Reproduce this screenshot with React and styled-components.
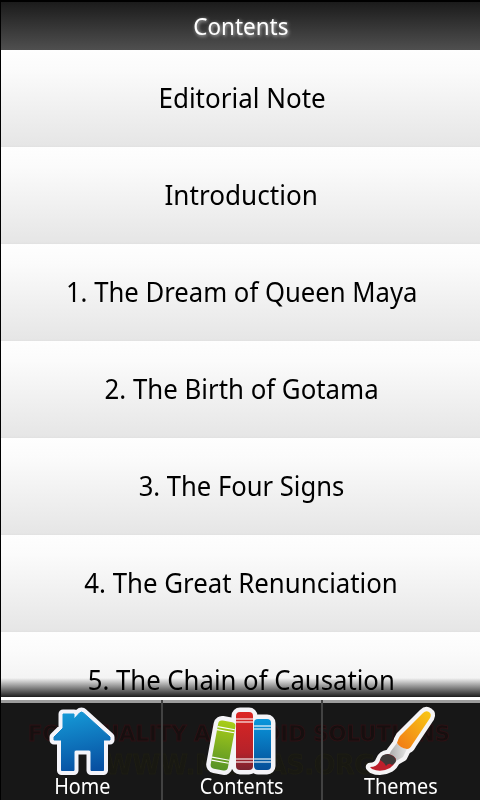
import React from "react";
import styled, { createGlobalStyle } from "styled-components";

const Global = createGlobalStyle`
  * { box-sizing: border-box; }
  body { margin: 0; background: #000; overflow: hidden; }
`;

const Screen = styled.div`
  width: 480px;
  height: 800px;
  padding: 2px 0 0 1px;
  display: flex;
  flex-direction: column;
  overflow: hidden;
  background: #000;
  font-family: "Noto Sans", "Open Sans", sans-serif;
`;

const Header = styled.header`
  height: 48px;
  flex: none;
  display: flex;
  align-items: center;
  justify-content: center;
  background: linear-gradient(#1b1b1b, #4f4f4f);
  color: #fff;
  font-size: 24px;
  text-shadow: 1px 1px 4px rgba(255, 255, 255, 0.75);
`;

const Label = styled.span`
  flex: none;
  white-space: nowrap;
  line-height: 1.3;
  margin-left: ${(p) => p.$nudge || 0}px;
  transform: scaleX(${(p) => p.$stretch || 1});
`;

const List = styled.main`
  position: relative;
  height: 647px;
  flex: none;
  overflow: hidden;
`;

const Row = styled.div`
  height: 97px;
  display: flex;
  align-items: center;
  justify-content: center;
  padding-bottom: 3px;
  background: linear-gradient(#fefefe 0%, #fbfbfb 20%, #e6e6e6 98%, #e1e1e1 100%);
  color: #000;
  font-size: 28px;
`;

const Fade = styled.div`
  position: absolute;
  inset: auto 0 0 0;
  height: 19px;
  background: linear-gradient(transparent, rgba(0, 0, 0, 0.88));
`;

const TabBar = styled.nav`
  position: relative;
  height: 103px;
  flex: none;
  display: grid;
  grid-template-columns: 160px 160px 159px;
  border-top: 3px solid #fff;
  background: linear-gradient(#9c9c9c 3px, #171717 3px, #171717 100%);
`;

const Watermark = styled.svg`
  position: absolute;
  left: 0;
  top: 0;
  width: 479px;
  height: 100px;
  font-family: "DejaVu Sans", sans-serif;
  font-weight: 700;
  filter: blur(0.6px);
`;

const Tab = styled.div`
  position: relative;
  display: flex;
  flex-direction: column;
  align-items: center;
  padding-top: 4px;
  color: #fff;
  font-size: 22px;
  box-shadow: ${(p) => (p.$first ? "none" : "inset 2px 0 #424242")};
`;

const Icon = styled.svg`
  width: 80px;
  height: 68px;
  flex: none;
  overflow: visible;
  margin: 0 0 -1px -2px;
`;

const HOUSE = "M23 14h11v5l5.5-6q2-2 4 0L70 37v3H63.5V70.5H51V52q0-2-2-2H36q-2 0-2 2V70.5H21.5V40H14V37l9-9Z";

function HomeIcon() {
  return (
    <Icon viewBox="0 4 80 68">
      <defs>
        <linearGradient id="house" x1="0.4" x2="0.6" y2="1">
          <stop stopColor="#1597d5" />
          <stop offset="1" stopColor="#0750a2" />
        </linearGradient>
      </defs>
      <path d={HOUSE} fill="#f4f4fa" stroke="#f4f4fa" strokeWidth="9" strokeLinejoin="round" />
      <path d={HOUSE} fill="url(#house)" stroke="url(#house)" strokeWidth="1" strokeLinejoin="round" />
    </Icon>
  );
}

const BOOKS = [
  { x: -9, y: 0, w: 17.5, h: 49, fill: "url(#green)", at: "translate(23.3 45.5) rotate(10.4) translate(0 -24.5)" },
  { x: 36, y: 12, w: 17, h: 58, fill: "url(#red)" },
  { x: 54, y: 19, w: 17, h: 51, fill: "url(#blue)" },
];

function BooksIcon() {
  return (
    <Icon viewBox="0 4 80 68">
      <defs>
        <linearGradient id="green" x2="0" y2="1">
          <stop stopColor="#a9cd18" />
          <stop offset="1" stopColor="#579327" />
        </linearGradient>
        <linearGradient id="red" x2="0" y2="1">
          <stop stopColor="#dc2523" />
          <stop offset="0.7" stopColor="#b5222a" />
          <stop offset="1" stopColor="#7a2430" />
        </linearGradient>
        <linearGradient id="blue" x2="0" y2="1">
          <stop stopColor="#0997dc" />
          <stop offset="1" stopColor="#064f99" />
        </linearGradient>
      </defs>
      {BOOKS.map((b) => (
        <rect key={b.fill} x={b.x} y={b.y} width={b.w} height={b.h} rx="4" transform={b.at} fill="#f4f3f7" stroke="#f4f3f7" strokeWidth="9" />
      ))}
      {BOOKS.map((b) => (
        <g key={b.fill} transform={b.at}>
          <rect x={b.x} y={b.y} width={b.w} height={b.h} rx="4" fill={b.fill} />
          {[7, 10, b.h - 11, b.h - 8].map((y) => (
            <path key={y} d={`M${b.x} ${b.y + y}h${b.w}`} stroke="#fff" strokeWidth="1.1" />
          ))}
        </g>
      ))}
    </Icon>
  );
}

const HANDLE = "M63 13q3-3 6-1 3 2 1 6L52 45q-2 4-5 4-7-1-10-6 1-4 3-7Z";
const FERRULE = "M37 43q4 5 10 6l-4 8-7 4-7-6 2-4Z";
const BRISTLES = "M20 60q2-5 8-6 6 1 8 5-1 6-6 9-9 5-18 1l-2-2q8 0 10-7Z";

function BrushIcon() {
  return (
    <Icon viewBox="0 4 80 68">
      <defs>
        <linearGradient id="handle" x1="1" x2="0" y2="1">
          <stop stopColor="#f8c814" />
          <stop offset="1" stopColor="#f17817" />
        </linearGradient>
        <linearGradient id="ferrule">
          <stop stopColor="#aaa" />
          <stop offset="1" stopColor="#e4e4e4" />
        </linearGradient>
      </defs>
      {[HANDLE, FERRULE, BRISTLES].map((d) => (
        <path key={d} d={d} fill="#f5f4f6" stroke="#f5f4f6" strokeWidth="8.5" strokeLinejoin="round" />
      ))}
      <path d={FERRULE} fill="url(#ferrule)" />
      <path d={HANDLE} fill="url(#handle)" />
      <path d={BRISTLES} fill="#bd1f2b" />
      <path d="M20 60q1-6 8-6 8 2 8 7-1 3-4 4-3-3-6 1-2-4-6-6" fill="#3d3938" />
    </Icon>
  );
}

const CHAPTERS = [
  ["Editorial Note", 0.928, 3],
  ["Introduction", 0.933, 1],
  ["1. The Dream of Queen Maya", 0.917, 2],
  ["2. The Birth of Gotama", 0.922, 2],
  ["3. The Four Signs", 0.914, 1],
  ["4. The Great Renunciation", 0.922, 2],
  ["5. The Chain of Causation", 0.918, 1],
];

const TABS = [
  ["Home", HomeIcon, 3],
  ["Contents", BooksIcon, 1],
  ["Themes", BrushIcon, 0],
];

export default function App() {
  return (
    <>
      <Global />
      <Screen>
        <Header>
          <Label $stretch={0.935} $nudge={1}>Contents</Label>
        </Header>
        <List>
          {CHAPTERS.map(([title, stretch, nudge]) => (
            <Row key={title}>
              <Label $stretch={stretch} $nudge={nudge}>{title}</Label>
            </Row>
          ))}
          <Fade />
        </List>
        <TabBar>
          <Watermark aria-hidden="true">
            <g fill="#160f0f" stroke="#2d1215" strokeWidth="1">
              <text x="27" y="41" fontSize="22" textLength="422" lengthAdjust="spacingAndGlyphs">
                FOR QUALITY ANDROID SOLUTIONS
              </text>
            </g>
            <g fill="#181812" stroke="#1e1e14" strokeWidth="1">
              <text x="104" y="74" fontSize="26" textLength="270" lengthAdjust="spacingAndGlyphs">
                WWW.MEDIAS.ORG
              </text>
            </g>
          </Watermark>
          {TABS.map(([name, Glyph, nudge], i) => (
            <Tab key={name} $first={i === 0}>
              <Glyph />
              <Label $stretch={0.9} $nudge={nudge}>{name}</Label>
            </Tab>
          ))}
        </TabBar>
      </Screen>
    </>
  );
}
